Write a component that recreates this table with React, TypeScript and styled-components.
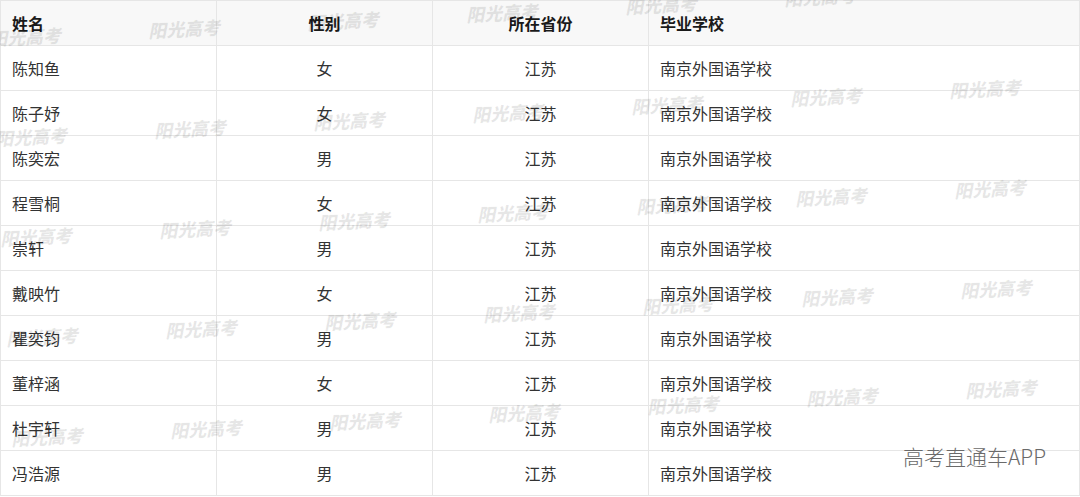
import React from "react";
import styled, { createGlobalStyle } from "styled-components";

const Global = createGlobalStyle`
  html, body { margin: 0; padding: 0; background: #ffffff; }
  body { font-family: "Noto Sans CJK SC", "Noto Sans", sans-serif; }
`;

const Page = styled.div`
  position: relative;
  width: 1080px;
  height: 497px;
  overflow: hidden;
  background: #ffffff;
`;

const Table = styled.div`
  display: grid;
  grid-template-columns: 216px 216px 216px 1fr;
  border-top: 1px solid #e6e6e6;
  border-left: 1px solid #e6e6e6;
`;

const Cell = styled.div<{ $align: "left" | "center"; $head?: boolean }>`
  box-sizing: border-box;
  height: 45px;
  display: flex;
  align-items: center;
  justify-content: ${(p) => (p.$align === "center" ? "center" : "flex-start")};
  padding: 0 11px;
  border-right: 1px solid #e6e6e6;
  border-bottom: 1px solid #e6e6e6;
  background: ${(p) => (p.$head ? "#f8f8f8" : "#ffffff")};
  font-size: 16px;
  line-height: 1;
  color: ${(p) => (p.$head ? "#1a1a1a" : "#333333")};
  font-weight: ${(p) => (p.$head ? 700 : 400)};
  white-space: nowrap;
`;

const Overlay = styled.div`
  position: absolute;
  inset: 0;
  pointer-events: none;
`;

const Mark = styled.span`
  position: absolute;
  font-family: "Noto Sans CJK SC", sans-serif;
  font-size: 18px;
  line-height: 18px;
  font-weight: 900;
  font-style: italic;
  color: rgba(0, 0, 0, 0.065);
  text-shadow: 0 0 1px rgba(0, 0, 0, 0.04);
  transform: rotate(-3deg);
  transform-origin: left center;
  white-space: nowrap;
`;

const Brand = styled.span`
  position: absolute;
  left: 903px;
  top: 445px;
  font-family: "Noto Sans CJK SC", sans-serif;
  font-size: 21px;
  line-height: 22px;
  font-weight: 300;
  color: #6a6a6a;
  text-shadow: 0 0 2px rgba(255, 255, 255, 0.9);
  white-space: nowrap;
`;

const columns: { key: string; title: string; align: "left" | "center" }[] = [
  { key: "name", title: "姓名", align: "left" },
  { key: "gender", title: "性别", align: "center" },
  { key: "province", title: "所在省份", align: "center" },
  { key: "school", title: "毕业学校", align: "left" },
];

const rows = [
  ["陈知鱼", "女"],
  ["陈子妤", "女"],
  ["陈奕宏", "男"],
  ["程雪桐", "女"],
  ["崇轩", "男"],
  ["戴映竹", "女"],
  ["瞿奕钧", "男"],
  ["董梓涵", "女"],
  ["杜宇轩", "男"],
  ["冯浩源", "男"],
].map(([name, gender]) => ({
  name,
  gender,
  province: "江苏",
  school: "南京外国语学校",
}));

const marks: { x: number; y: number }[] = [];
for (let i = 0; i < 7; i++) {
  for (let j = 0; j < 5; j++) {
    marks.push({ x: -11 + 159 * i + 5.5 * j, y: 38 - 8 * i + 100 * j });
  }
}

export default function App() {
  return (
    <>
      <Global />
      <Page>
        <Table>
          {columns.map((c) => (
            <Cell key={c.key} $align={c.align} $head>
              {c.title}
            </Cell>
          ))}
          {rows.map((r, ri) =>
            columns.map((c) => (
              <Cell key={`${ri}-${c.key}`} $align={c.align}>
                {(r as Record<string, string>)[c.key]}
              </Cell>
            ))
          )}
        </Table>
        <Overlay>
          {marks.map((m, k) => (
            <Mark key={k} style={{ left: m.x, top: m.y - 9 }}>
              阳光高考
            </Mark>
          ))}
          <Brand>高考直通车APP</Brand>
        </Overlay>
      </Page>
    </>
  );
}
